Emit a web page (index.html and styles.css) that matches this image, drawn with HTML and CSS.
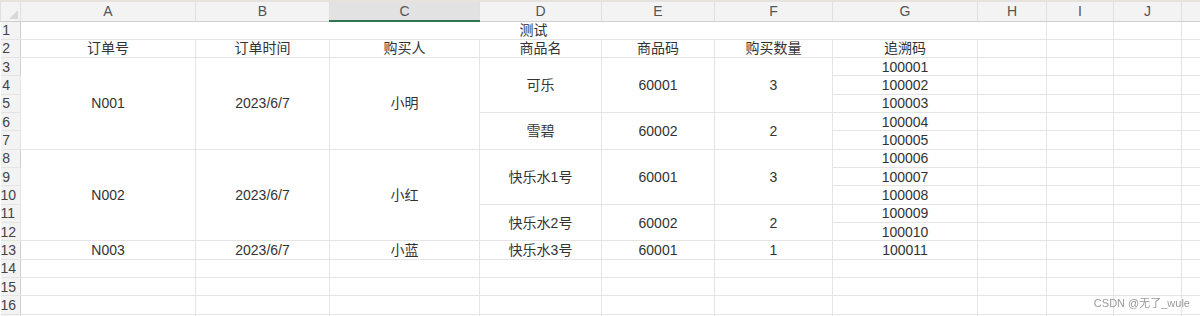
FILE: index.html
```html
<!DOCTYPE html>
<html lang="zh-CN">
<head>
    <meta charset="UTF-8">
    <title>测试</title>
    <link rel="stylesheet" href="styles.css">
</head>
<body>
    <table class="sheet">
        <colgroup>
            <col class="w-rh">
            <col class="w-a">
            <col class="w-b">
            <col class="w-c">
            <col class="w-d">
            <col class="w-e">
            <col class="w-f">
            <col class="w-g">
            <col class="w-h">
            <col class="w-i">
            <col class="w-j">
            <col class="w-k">
        </colgroup>
        <thead>
            <tr class="col-head">
                <th class="corner"></th>
                <th>A</th>
                <th>B</th>
                <th class="active">C</th>
                <th>D</th>
                <th>E</th>
                <th>F</th>
                <th>G</th>
                <th>H</th>
                <th>I</th>
                <th>J</th>
                <th></th>
            </tr>
        </thead>
        <tbody>
            <tr>
                <td class="rh">1</td>
                <td colspan="8" class="title">测试</td>
                <td></td><td></td><td></td>
            </tr>
            <tr>
                <td class="rh">2</td>
                <td>订单号</td>
                <td>订单时间</td>
                <td>购买人</td>
                <td>商品名</td>
                <td>商品码</td>
                <td>购买数量</td>
                <td>追溯码</td>
                <td></td><td></td><td></td><td></td>
            </tr>
            <tr>
                <td class="rh">3</td>
                <td rowspan="5">N001</td>
                <td rowspan="5">2023/6/7</td>
                <td rowspan="5">小明</td>
                <td rowspan="3">可乐</td>
                <td rowspan="3">60001</td>
                <td rowspan="3">3</td>
                <td>100001</td>
                <td></td><td></td><td></td><td></td>
            </tr>
            <tr>
                <td class="rh">4</td>
                <td>100002</td>
                <td></td><td></td><td></td><td></td>
            </tr>
            <tr>
                <td class="rh">5</td>
                <td>100003</td>
                <td></td><td></td><td></td><td></td>
            </tr>
            <tr>
                <td class="rh">6</td>
                <td rowspan="2">雪碧</td>
                <td rowspan="2">60002</td>
                <td rowspan="2">2</td>
                <td>100004</td>
                <td></td><td></td><td></td><td></td>
            </tr>
            <tr>
                <td class="rh">7</td>
                <td>100005</td>
                <td></td><td></td><td></td><td></td>
            </tr>
            <tr>
                <td class="rh">8</td>
                <td rowspan="5">N002</td>
                <td rowspan="5">2023/6/7</td>
                <td rowspan="5">小红</td>
                <td rowspan="3">快乐水1号</td>
                <td rowspan="3">60001</td>
                <td rowspan="3">3</td>
                <td>100006</td>
                <td></td><td></td><td></td><td></td>
            </tr>
            <tr>
                <td class="rh">9</td>
                <td>100007</td>
                <td></td><td></td><td></td><td></td>
            </tr>
            <tr>
                <td class="rh">10</td>
                <td>100008</td>
                <td></td><td></td><td></td><td></td>
            </tr>
            <tr>
                <td class="rh">11</td>
                <td rowspan="2">快乐水2号</td>
                <td rowspan="2">60002</td>
                <td rowspan="2">2</td>
                <td>100009</td>
                <td></td><td></td><td></td><td></td>
            </tr>
            <tr>
                <td class="rh">12</td>
                <td>100010</td>
                <td></td><td></td><td></td><td></td>
            </tr>
            <tr>
                <td class="rh">13</td>
                <td>N003</td>
                <td>2023/6/7</td>
                <td>小蓝</td>
                <td>快乐水3号</td>
                <td>60001</td>
                <td>1</td>
                <td>100011</td>
                <td></td><td></td><td></td><td></td>
            </tr>
            <tr>
                <td class="rh">14</td>
                <td></td><td></td><td></td><td></td><td></td><td></td><td></td><td></td><td></td><td></td><td></td>
            </tr>
            <tr>
                <td class="rh">15</td>
                <td></td><td></td><td></td><td></td><td></td><td></td><td></td><td></td><td></td><td></td><td></td>
            </tr>
            <tr>
                <td class="rh">16</td>
                <td></td><td></td><td></td><td></td><td></td><td></td><td></td><td></td><td></td><td></td><td></td>
            </tr>
            <tr>
                <td class="rh"></td>
                <td></td><td></td><td></td><td></td><td></td><td></td><td></td><td></td><td></td><td></td><td></td>
            </tr>
        </tbody>
    </table>

    <div class="watermark">CSDN @无了_wule</div>
</body>
</html>
```

FILE: styles.css
```css
* {
    box-sizing: border-box;
}

body {
    margin: 0;
    overflow: hidden;
    height: 316px;
    background: #fff;
    color: #333;
    font-family: "Liberation Sans", "Noto Sans CJK SC", sans-serif;
    font-size: 14px;
}

.sheet {
    border-collapse: collapse;
    table-layout: fixed;
    width: 1222px;
}

/* column widths */
.w-rh { width: 20px; }
.w-a { width: 175px; }
.w-b { width: 134px; }
.w-c { width: 150px; }
.w-d { width: 122px; }
.w-e { width: 113px; }
.w-f { width: 118px; }
.w-g { width: 145px; }
.w-h { width: 69px; }
.w-i { width: 67px; }
.w-j { width: 68px; }
.w-k { width: 41px; }

.sheet tbody tr {
    height: 18.33px;
}

.sheet td {
    border: 1px solid #e4e4e4;
    padding: 0;
    color: #333;
    text-align: center;
    vertical-align: middle;
    white-space: nowrap;
    overflow: hidden;
    line-height: 16px;
}

.sheet td.title {
    color: #333;
}

/* column header bar */
.col-head {
    height: 20px;
}

.col-head th {
    background: #f3f3f3;
    border-top: 2px solid #e6e2de;
    border-left: 1px solid #e0e0e0;
    border-right: 1px solid #e0e0e0;
    border-bottom: 1px solid #cfcfcf;
    color: #555;
    font-weight: normal;
    font-size: 14px;
    line-height: 16px;
    padding: 0;
}

.col-head th.active {
    background: #e2e2e2;
    border-bottom: 2px solid #2f7552;
}

.corner {
    position: relative;
    border-left: none;
}

.corner::after {
    content: "";
    position: absolute;
    right: 2px;
    bottom: 2px;
    border-style: solid;
    border-width: 0 0 9px 9px;
    border-color: transparent transparent #d8d8d8 transparent;
}

/* row numbers */
.sheet td.rh {
    background: #f3f3f3;
    border-left: none;
    border-right: 1px solid #cfcfcf;
    border-top-color: #e2e2e2;
    color: #444;
    padding-right: 8px;
    font-size: 14px;
    overflow: visible;
}

.watermark {
    position: fixed;
    right: 10px;
    bottom: 6px;
    font-size: 11px;
    color: #9a9a9a;
}
```
